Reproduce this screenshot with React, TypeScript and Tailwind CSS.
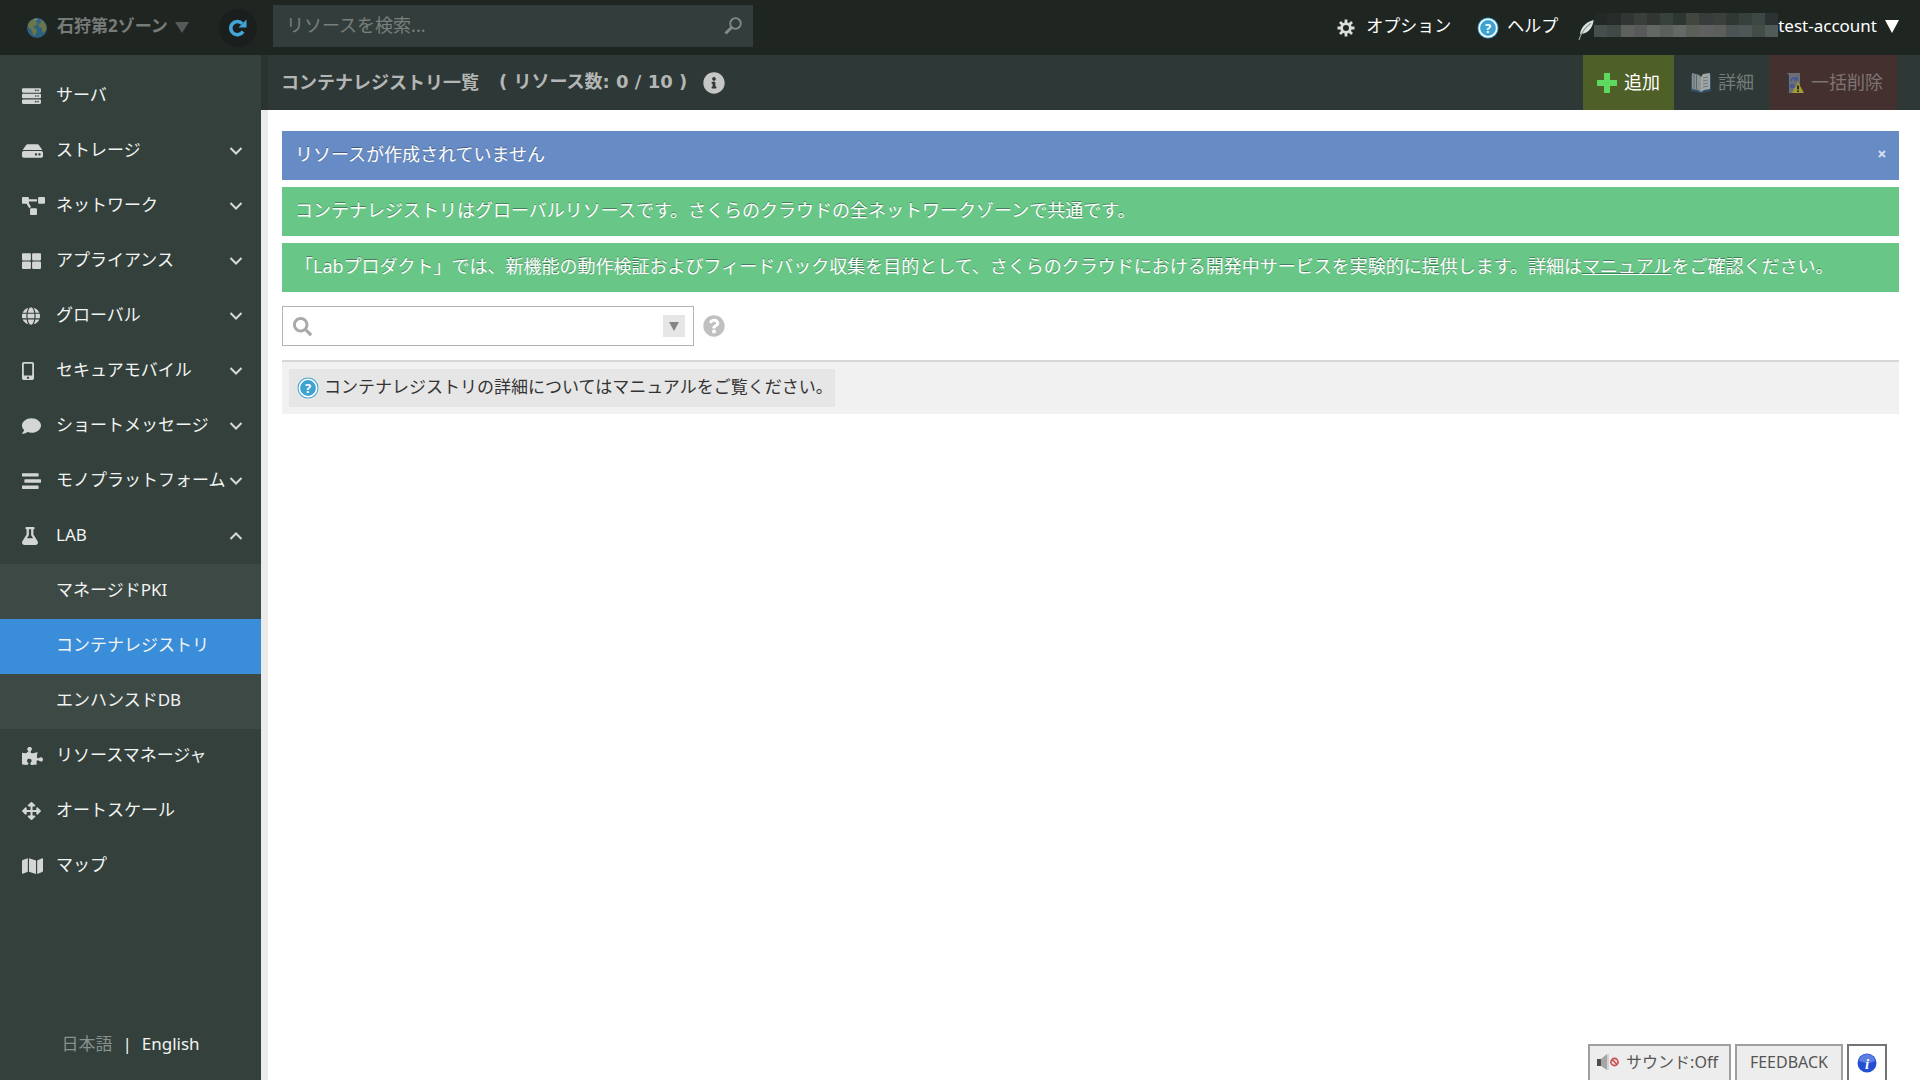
import React from 'react';
import {
  FaArrowsAlt,
  FaComment,
  FaFlask,
  FaGlobe,
  FaHdd,
  FaInfoCircle,
  FaMap,
  FaMobileAlt,
  FaProjectDiagram,
  FaPuzzlePiece,
  FaQuestionCircle,
  FaSearch,
  FaServer,
  FaStream,
  FaThLarge,
} from 'react-icons/fa';

const menu = [
  { label: 'サーバ', icon: FaServer, size: 'w-[19px]' },
  { label: 'ストレージ', icon: FaHdd, size: 'w-[21px]', arrow: 'down' },
  { label: 'ネットワーク', icon: FaProjectDiagram, size: 'w-[23px]', arrow: 'down' },
  { label: 'アプライアンス', icon: FaThLarge, size: 'w-[19px]', arrow: 'down' },
  { label: 'グローバル', icon: FaGlobe, size: 'w-[18px]', arrow: 'down' },
  { label: 'セキュアモバイル', icon: FaMobileAlt, size: 'w-[12px]', arrow: 'down' },
  { label: 'ショートメッセージ', icon: FaComment, size: 'w-[19px]', arrow: 'down' },
  { label: 'モノプラットフォーム', icon: FaStream, size: 'w-[19px]', arrow: 'down' },
  {
    label: 'LAB',
    icon: FaFlask,
    size: 'w-[16px]',
    arrow: 'up',
    children: ['マネージドPKI', 'コンテナレジストリ', 'エンハンスドDB'],
  },
  { label: 'リソースマネージャ', icon: FaPuzzlePiece, size: 'w-[21px]' },
  { label: 'オートスケール', icon: FaArrowsAlt, size: 'w-[19px]' },
  { label: 'マップ', icon: FaMap, size: 'w-[21px]' },
];

const current = 'コンテナレジストリ';

// masked account name, two rows of tiles
const mask = [
  ['#222926', '#252c29', '#303634', '#3a3f3c', '#313633', '#38423d', '#2d3633', '#42463f', '#373d3a', '#3c403a', '#303834', '#36403d', '#3d4744', '#2b3231'],
  ['#474f4e', '#414947', '#5d605d', '#57595b', '#636764', '#5b605d', '#646967', '#5a5f58', '#5f605f', '#5c5e5c', '#4b5355', '#505656', '#444c48', '#505a59'],
];

const Chevron = ({ dir }: { dir: string }) => (
  <svg viewBox="0 0 14 10" className="h-[10px] w-[14px] shrink-0" fill="none" stroke="#d6d9d8" strokeWidth="2">
    <path d={dir === 'up' ? 'M1.5 8 L7 2.5 L12.5 8' : 'M1.5 2 L7 7.5 L12.5 2'} />
  </svg>
);

const HelpIcon = () => (
  <svg viewBox="0 0 22 22" className="size-[22px] shrink-0">
    <circle cx="11" cy="11" r="10.5" fill="#3fa3d1" />
    <circle cx="11" cy="11" r="8.7" fill="#3fa3d1" stroke="#fff" strokeWidth="1.6" />
    <text x="11" y="15.5" textAnchor="middle" fontSize="13" fontWeight="700" fill="#fff">?</text>
  </svg>
);

const EarthIcon = () => (
  <svg viewBox="0 0 20 20" className="size-5">
    <circle cx="10" cy="10" r="10" fill="#2f6180" />
    <path d="M1 6 C3 2 6 1 8 2 L10 3 L9 5 L11 6 L8 8 L6 9 L9 11 L10 14 L7 18 L5 14 L4 11 L1 9 Z" fill="#6b774a" />
    <path d="M13 2 L16 3 L19 7 L19.5 11 L17 15 L15 13 L15 10 L12 9 L12 6 L14 5 Z" fill="#6b774a" />
    <path d="M6 1.500 L9 .5 L12 1 L8 2.500 Z" fill="#7c8d86" />
  </svg>
);

const RefreshIcon = () => (
  <svg viewBox="0 0 18 18" className="size-[18px]">
    <path d="M14 12.5 A6.6 6.6 0 1 1 13.2 4.6" fill="none" stroke="#42a5d8" strokeWidth="3.6" />
    <path d="M17.5 0.5 V8.5 H9.5 Z" fill="#42a5d8" />
  </svg>
);

const GearIcon = () => (
  <svg viewBox="0 0 20 20" className="size-5">
    <g stroke="#dcdcdc" strokeWidth="2.8">
      <path d="M10 1.5 V5 M10 15 V18.5 M1.5 10 H5 M15 10 H18.5 M4 4 L6.5 6.5 M13.5 13.5 L16 16 M16 4 L13.5 6.5 M6.5 13.5 L4 16" />
      <circle cx="10" cy="10" r="4.4" fill="none" />
    </g>
  </svg>
);

const FeatherIcon = () => (
  <svg viewBox="0 0 16 22" className="mt-1 h-[22px] w-4">
    <path d="M15.500 1 C8 3 3 8 2 15 C7 15 11 12 13 9 C14.500 6 15.500 4 15.500 1 Z" fill="#dce4e1" />
    <path d="M13 4 C8 8 3 13 1 21" fill="none" stroke="#8f9d99" strokeWidth="1.2" />
  </svg>
);

const BookIcon = () => (
  <svg viewBox="0 0 22 22" className="size-[22px]">
    <path d="M1 3 L11 5 L21 3 V19 L11 21 L1 19 Z" fill="#31526a" />
    <path d="M2 1 L9 3 L11 5 V20 L8 18 L2 17 Z" fill="#8c9493" />
    <path d="M11 5 L13 2 L20 1 V17 L14 18 L11 20 Z" fill="#a0a7a5" />
    <path d="M4 2 V17 M6.500 3 V17" stroke="#59676a" strokeWidth="1" />
    <path d="M13 6 L18 5 M13 9 L18 8 M13 12 L18 11 M13 15 L18 14" stroke="#6c7777" strokeWidth="1" />
  </svg>
);

const TrashServerIcon = () => (
  <svg viewBox="0 0 20 22" className="h-[22px] w-5">
    <path d="M2 1 H15 V21 H2 Z" fill="#6d6f76" />
    <path d="M2 1 L4 3 V21 H2 Z" fill="#34373c" />
    <path d="M6 9 C7 5 11 5 12 8 M12 5 V8 H9 M12 13 C10 16 7 16 6 13 M6 16 V13 H9" fill="none" stroke="#43549a" strokeWidth="1.500" />
    <path d="M13 10 L19 21 H7 Z" fill="#a39c36" />
    <path d="M13 13.500 V17.500 M13 18.500 V20" stroke="#222" strokeWidth="1.800" />
  </svg>
);

const SpeakerIcon = () => (
  <svg viewBox="0 0 24 18" className="h-[18px] w-6">
    <path d="M1 6 H5 V13 H1 Z" fill="#4c4c4c" />
    <path d="M5 6 L11 1 V17 L5 13 Z" fill="#a5a5a5" />
    <path d="M11 1 H13 V17 H11 Z" fill="#d3d3d3" />
    <circle cx="18.500" cy="9" r="3.600" fill="#f3dada" stroke="#c95055" strokeWidth="1.600" />
    <path d="M16 6.500 L21 11.500" stroke="#c95055" strokeWidth="1.600" />
  </svg>
);

const InfoIcon = () => (
  <svg viewBox="0 0 20 20" className="size-5">
    <circle cx="10" cy="10" r="9.500" fill="#2350d2" />
    <path d="M2 8 C3 -1 17 -1 18 8 C13 11 7 10 2 8 Z" fill="#5c7fe2" />
    <text x="10" y="15.500" textAnchor="middle" fontSize="15" fontWeight="700" fontStyle="italic" fill="#fff" className="font-['Liberation_Serif',serif]">i</text>
  </svg>
);

const TopBar = () => (
  <header className="flex h-[55px] shrink-0 items-center bg-[#1f2622] pr-[21px] text-[17px] text-white">
    <div className="flex w-[273px] shrink-0 items-center pl-[27px]">
      <button className="flex items-center font-bold text-[#777b79]">
        <EarthIcon />
        <span className="ml-[10px] pb-1">石狩第2ゾーン</span>
        <svg viewBox="0 0 14 11" className="ml-[7px] h-[11px] w-[14px]"><path d="M0 0 H14 L7 11 Z" fill="#545b58" /></svg>
      </button>
      <button aria-label="更新" className="ml-[30px] flex size-[38px] items-center justify-center rounded-full bg-[#1a1f1d]">
        <RefreshIcon />
      </button>
    </div>
    <label className="mb-[3px] flex h-[42px] w-[480px] items-center bg-[#333e3c] pr-[11px] pl-[13px]">
      <input
        aria-label="リソースを検索"
        placeholder="リソースを検索..."
        className="h-full min-w-0 grow bg-transparent pb-[2px] text-lg text-white outline-none placeholder:text-[#7a7f7d]"
      />
      <svg viewBox="0 0 18 18" className="size-[18px]" fill="none" stroke="#858887">
        <circle cx="11.500" cy="6.500" r="5.300" strokeWidth="1.800" />
        <path d="M7.500 10.500 L1.500 16.500" strokeWidth="3" />
      </svg>
    </label>
    <nav className="ml-auto flex items-center">
      <a href="#" className="flex items-center gap-[10px]">
        <GearIcon />
        <span className="pb-1">オプション</span>
      </a>
      <a href="#" className="ml-[26px] flex items-center gap-2">
        <HelpIcon />
        <span className="pb-1">ヘルプ</span>
      </a>
      <button className="ml-5 flex items-center">
        <FeatherIcon />
        <span className="mb-[6px] grid w-[184px] grid-cols-14">
          {mask.flat().map((color, i) => (
            <span key={i} className="h-3" style={{ backgroundColor: color }} />
          ))}
        </span>
        <span className="pb-1">test-account</span>
        <svg viewBox="0 0 14 13" className="ml-2 mb-[2px] h-[13px] w-[14px]"><path d="M0 0 H14 L7 13 Z" fill="#fff" /></svg>
      </button>
    </nav>
  </header>
);

const Sidebar = () => (
  <aside className="flex w-[261px] shrink-0 flex-col bg-[#33403b] pt-[14px] text-[17px] text-[#f2f4f3]">
    <ul>
      {menu.map(({ label, icon: Icon, size, arrow, children }) => (
        <li key={label}>
          <a href="#" className="flex h-[55px] items-center pr-[18px] pb-[2px] pl-[22px]">
            <span className="w-[34px] shrink-0">
              <Icon preserveAspectRatio="none" className={'h-[18px] text-[#d3d6d5] ' + size} />
            </span>
            <span className="min-w-0 grow pb-[2px] whitespace-nowrap">{label}</span>
            {arrow && <Chevron dir={arrow} />}
          </a>
          {children && (
            <ul className="bg-[#3d4945]">
              {children.map((child) => (
                <li key={child}>
                  <a
                    href="#"
                    className={
                      child === current
                        ? 'flex h-[55px] items-center bg-[#3a8dd8] pb-1 pl-[56px]'
                        : 'flex h-[55px] items-center pb-1 pl-[56px]'
                    }
                  >
                    {child}
                  </a>
                </li>
              ))}
            </ul>
          )}
        </li>
      ))}
    </ul>
    <div className="mt-auto mb-6 flex justify-center gap-[10px]">
      <span className="text-[#88908d]">日本語</span>
      <span>|</span>
      <a href="#">English</a>
    </div>
  </aside>
);

const PageHeader = () => (
  <div className="flex h-[55px] shrink-0 items-center border-l-[7px] border-[#2b3331] bg-[#2e3836] pr-[23px] pl-[13px] text-lg">
    <h1 className="pb-[2px] font-bold text-[#b3b6b5]">コンテナレジストリ一覧</h1>
    <span className="ml-5 pb-[2px] font-['DejaVu_Sans','Noto_Sans_CJK_JP',sans-serif] font-bold text-[#b3b6b5]">
      ( リソース数: 0 / 10 )
    </span>
    <FaInfoCircle className="ml-4 size-[22px] text-[#c6c6c6]" />
    <div className="ml-auto flex h-full">
      <button className="flex items-center gap-[7px] bg-[#4f5f28] px-[14px] text-white">
        <svg viewBox="0 0 20 20" className="size-5"><path d="M7 0 H13 V7 H20 V13 H13 V20 H7 V13 H0 V7 H7 Z" fill="#5fd85f" /></svg>
        <span className="pb-[2px]">追加</span>
      </button>
      <button disabled className="flex items-center gap-[6px] px-4 text-[#747b79]">
        <BookIcon />
        <span className="pb-[2px]">詳細</span>
      </button>
      <button disabled className="flex items-center gap-[6px] bg-[#43302f] pr-[14px] pl-[15px] text-[#7f7473]">
        <TrashServerIcon />
        <span className="pb-[2px]">一括削除</span>
      </button>
    </div>
  </div>
);

const Notice = ({ tone, closable, children }: { tone: 'blue' | 'green'; closable?: boolean; children: React.ReactNode }) => (
  <div
    className={
      'flex min-h-[49px] items-center justify-between px-[13px] pb-1 text-lg text-white text-shadow-[0_-1px_0_rgb(0_0_0/0.35)] ' +
      (tone === 'blue' ? 'bg-[#678bc4]' : 'bg-[#68c687]')
    }
  >
    <p>{children}</p>
    {closable && (
      <button aria-label="閉じる" className="size-2">
        <svg viewBox="0 0 8 8" className="size-2"><path d="M1 1 L7 7 M7 1 L1 7" stroke="#d4def0" strokeWidth="2" /></svg>
      </button>
    )}
  </div>
);

const FilterBar = () => (
  <div className="mt-[14px] flex items-center gap-[9px]">
    <div className="flex h-10 w-[412px] items-center border border-[#b3b3b3] px-2">
      <FaSearch className="ml-[2px] size-[19px] text-[#a9a9a9]" />
      <input aria-label="絞り込み" className="mx-2 min-w-0 grow outline-none" />
      <button aria-label="条件を開く" className="flex size-[22px] items-center justify-center bg-[#e6e6e6]">
        <svg viewBox="0 0 10 9" className="h-[9px] w-[10px]"><path d="M0 0 H10 L5 9 Z" fill="#858585" /></svg>
      </button>
    </div>
    <FaQuestionCircle className="size-[22px] text-[#c0c0c0]" />
  </div>
);

export default function App() {
  return (
    <div className="flex min-h-screen flex-col bg-white font-['Noto_Sans','Noto_Sans_CJK_JP',sans-serif]" lang="ja">
      <TopBar />
      <div className="flex grow">
        <Sidebar />
        <div className="flex min-w-0 grow flex-col">
          <PageHeader />
          <main className="flex grow flex-col border-l-[7px] border-[#ebebeb] pt-[21px] pl-[14px]">
            <div className="mr-[21px]">
              <div className="flex flex-col gap-[7px]">
                <Notice tone="blue" closable>リソースが作成されていません</Notice>
                <Notice tone="green">
                  コンテナレジストリはグローバルリソースです。さくらのクラウドの全ネットワークゾーンで共通です。
                </Notice>
                <Notice tone="green">
                  「Labプロダクト」では、新機能の動作検証およびフィードバック収集を目的として、さくらのクラウドにおける開発中サービスを実験的に提供します。詳細は
                  <a href="#" className="underline">マニュアル</a>
                  をご確認ください。
                </Notice>
              </div>
              <FilterBar />
              <div className="mt-[14px] flex border-t-2 border-[#d7d7d7] bg-[#f1f1f1] p-[7px]">
                <a href="#" className="flex h-[38px] items-center gap-[5px] bg-[#e6e6e6] pr-[2px] pl-2 text-[17px] text-[#333]">
                  <HelpIcon />
                  <span className="pb-[2px]">コンテナレジストリの詳細についてはマニュアルをご覧ください。</span>
                </a>
              </div>
            </div>
            <div className="mt-auto mr-[33px] flex h-9 justify-end gap-1 text-base text-[#555]">
              <button className="flex items-center gap-[6px] border-2 border-b-0 border-[#a0a0a0] bg-[#ededed] pr-[11px] pb-[2px] pl-[6px]">
                <SpeakerIcon />
                サウンド:Off
              </button>
              <button className="border-2 border-b-0 border-[#a0a0a0] bg-[#ededed] px-[13px] pb-[2px]">FEEDBACK</button>
              <button aria-label="情報" className="flex w-10 items-center justify-center border-2 border-b-0 border-[#747474] bg-white">
                <InfoIcon />
              </button>
            </div>
          </main>
        </div>
      </div>
    </div>
  );
}
